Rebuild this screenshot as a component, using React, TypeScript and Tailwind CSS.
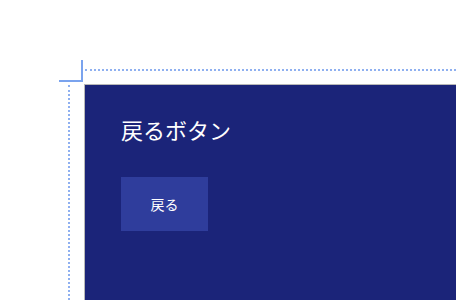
import React from "react";

const App = () => {
  return (
    <div className="relative h-[300px] w-[456px] overflow-hidden bg-white font-['Noto_Sans_CJK_JP',sans-serif]">
      {/* guides */}
      <div className="absolute left-[85px] right-0 top-[69px] border-t-2 border-dotted border-[#8fb0f0]" />
      <div className="absolute left-[68px] top-[85px] bottom-0 border-l-2 border-dotted border-[#8fb0f0]" />
      <div className="absolute left-[81px] top-[60px] h-[22px] w-[2px] bg-[#7aa3ee]" />
      <div className="absolute left-[59px] top-[80px] h-[2px] w-[24px] bg-[#7aa3ee]" />

      <div className="ml-[84px] pt-[84px]">
        <div className="h-[216px] border-l border-t border-[#b8b8b8] bg-[#1b2479] pl-[36px] pt-[29px]">
          <h1 className="text-[22px] leading-[30px] text-white">戻るボタン</h1>
          <button className="mt-[33px] flex h-[54px] w-[87px] items-center justify-center bg-[#2f3d9c] text-[14px] text-white">
            戻る
          </button>
        </div>
      </div>
    </div>
  );
};

export default App;
